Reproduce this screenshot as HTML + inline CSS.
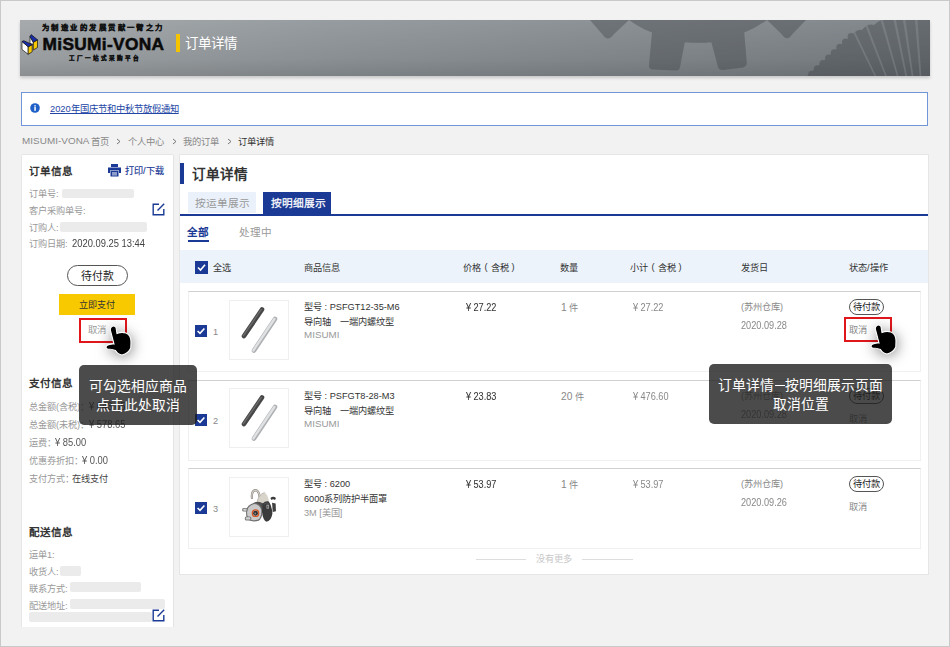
<!DOCTYPE html>
<html lang="zh-CN">
<head>
<meta charset="utf-8">
<style>
*{margin:0;padding:0;box-sizing:border-box}
html,body{width:950px;height:647px;overflow:hidden}
body{background:#f2f2f2;font-family:"Liberation Sans",sans-serif;position:relative;color:#333}
.a{position:absolute;white-space:nowrap;line-height:1}
#frame{position:absolute;left:0;top:0;width:950px;height:647px;border:1px solid #c9c9c9;pointer-events:none;z-index:50}
#banner{position:absolute;left:20px;top:20px;width:910px;height:56px;background:linear-gradient(180deg,rgba(255,255,255,.07),rgba(0,0,0,.04) 70%,rgba(0,0,0,.13)),linear-gradient(90deg,#a0a4a7 0%,#8e9498 35%,#858b8f 60%,#787e83 100%);box-shadow:0 2px 3px rgba(0,0,0,.18);overflow:hidden}
#notice{position:absolute;left:21px;top:92px;width:907px;height:34px;background:#fff;border:1px solid #7096d8}
.panel{position:absolute;background:#fff;box-shadow:0 0 0 1px #e6e6e6}
.pnb{box-shadow:-1px 0 0 #e6e6e6,1px 0 0 #e3e3e3,0 -1px 0 #e6e6e6}
.lb{color:#999;font-size:9.2px}
.dk{color:#333}
.bar{position:absolute;background:#ebebeb;border-radius:2px}
.cb{position:absolute;width:12px;height:12px;background:#1b3a95}
.cb svg{position:absolute;left:0;top:0}
.row{position:absolute;left:188px;width:733px;height:81px;border:1px solid #f0f0f0;border-top:1px solid #d0d0d0;background:#fff}
.img{position:absolute;left:229px;width:60px;height:60px;border:1px solid #efefef;background:#fff}
.pill{position:absolute;border:1px solid #555;border-radius:8px;height:16px;width:35px;font-size:9.2px;line-height:15px;text-align:center;color:#222}
.redbox{position:absolute;border:2px solid #e0161b}
.tip{position:absolute;background:rgba(30,30,30,.8);border-radius:5px;color:#fff;font-size:13.8px;line-height:19px;text-align:center}
.t9{font-size:9.2px}
.gr{color:#888}
.hand{position:absolute;width:30px;height:30px}
</style>
</head>
<body>
<div id="frame"></div>

<!-- banner -->
<div id="banner">
  <svg width="910" height="56" style="position:absolute;left:0;top:0">
    <g fill="#32353a" opacity="0.32">
      <path d="M570,0 L582.5,14.5 Q588,22.5 593.5,14.5 L609,0 Q620,8 632,12.6 L629,45 Q628.5,49.5 633,49.5 L655,50.5 Q659.5,51 660,47 L664.8,22.2 Q678,23.5 691.4,22.2 L698,47 Q699,50.5 703,50 L723,47.5 Q727,46.5 726.8,42.5 L724.2,12.6 Q736,8 747,0 L761.5,14 Q767,22.5 772.5,14 L786,0 Z"/>
      <path d="M787,56 L832,15 Q837,9 842,10 Q848,3 854,5 Q860,-1 866,0 L910,0 L910,56 Z"/>
      <circle cx="791.8" cy="54.3" r="3.6"/><circle cx="797.4" cy="48.9" r="3.6"/><circle cx="803.1" cy="43.6" r="3.6"/><circle cx="808.7" cy="38.2" r="3.6"/><circle cx="814.3" cy="32.8" r="3.6"/><circle cx="819.9" cy="27.4" r="3.6"/><circle cx="825.6" cy="22.1" r="3.6"/><circle cx="831.2" cy="16.7" r="3.6"/>
    </g>
    <clipPath id="fanclip"><path d="M787,56 L832,15 Q837,9 842,10 Q848,3 854,5 Q860,-1 866,0 L910,0 L910,56 Z"/></clipPath>
    <g fill="#b8bbbe" opacity="0.22" clip-path="url(#fanclip)">
      <polygon points="909,167 827,0 829.5,0"/>
      <polygon points="909,167 843,0 845.5,0"/>
      <polygon points="909,167 860.5,0 863,0"/>
      <polygon points="909,167 873.5,0 876,0"/>
      <polygon points="909,167 883,0 885.5,0"/>
      <polygon points="909,167 895,0 897.5,0"/>
    </g>
  </svg>
  <!-- logo -->
  <svg width="20" height="24" viewBox="0 0 20 24" style="position:absolute;left:0;top:12px">
    <g stroke="#151515" stroke-width="0.7" stroke-linejoin="round">
      <polygon points="10,4.5 13.3,10.3 13.3,12.5 10,11.5" fill="#fff"/>
      <polygon points="13.3,10.3 17.5,7.8 17.5,15.5 13.3,18" fill="#f5c800"/>
      <polygon points="10,4.5 11.2,2.6 17.5,7.8 13.3,10.3" fill="#1a2ea8"/>
      <polygon points="2,9.5 8.2,14.8 8.2,22.3 2,17.5" fill="#fff"/>
      <polygon points="8.2,14.8 12.2,12.6 12.2,19.8 8.2,22.3" fill="#f5c800"/>
      <polygon points="2,9.5 3.8,8.7 12.2,12.6 8.2,14.8" fill="#1a2ea8"/>
    </g>
  </svg>
  <div class="a" style="left:22px;top:4px;font-size:7.4px;font-weight:bold;color:#111;letter-spacing:2.45px;-webkit-text-stroke:0.2px #111">为制造业的发展贡献一臂之力</div>
  <div class="a" style="left:22.5px;top:16px;font-size:17.3px;font-weight:bold;color:#0a0a0a;letter-spacing:0.35px;-webkit-text-stroke:0.55px #0a0a0a">MiSUMi-VONA</div>
  <div class="a" style="left:48.5px;top:36px;font-size:5.6px;font-weight:bold;color:#111;letter-spacing:2.05px;-webkit-text-stroke:0.3px #111">工厂一站式采购平台</div>
  <div style="position:absolute;left:156px;top:14px;width:4px;height:18px;background:#f5c400"></div>
  <div class="a" style="left:165px;top:17px;font-size:13.5px;color:#fff">订单详情</div>
</div>

<!-- notice -->
<div id="notice">
  <svg width="10" height="10" style="position:absolute;left:8px;top:10px"><circle cx="5" cy="5" r="4.8" fill="#1f5fc8"/><rect x="4.3" y="4" width="1.5" height="3.8" fill="#fff"/><rect x="4.3" y="2.2" width="1.5" height="1.3" fill="#fff"/></svg>
  <div class="a" style="left:28px;top:12px;font-size:9.3px;color:#2346a6;text-decoration:underline">2020年国庆节和中秋节放假通知</div>
</div>

<!-- breadcrumb -->
<div class="a" style="left:22px;top:136px;font-size:9.9px;color:#888;letter-spacing:0.05px">MISUMI-VONA</div><div class="a" style="left:91px;top:138px;font-size:9.3px;color:#888">首页</div>
<svg width="5" height="7" style="position:absolute;left:116px;top:138px"><path d="M1,1 L4,3.5 L1,6" fill="none" stroke="#777" stroke-width="1"/></svg>
<div class="a" style="left:128px;top:138px;font-size:9.3px;color:#888">个人中心</div>
<svg width="5" height="7" style="position:absolute;left:171.5px;top:138px"><path d="M1,1 L4,3.5 L1,6" fill="none" stroke="#777" stroke-width="1"/></svg>
<div class="a" style="left:183px;top:138px;font-size:9.3px;color:#888">我的订单</div>
<svg width="5" height="7" style="position:absolute;left:226.5px;top:138px"><path d="M1,1 L4,3.5 L1,6" fill="none" stroke="#777" stroke-width="1"/></svg>
<div class="a" style="left:238px;top:138px;font-size:9.3px;color:#333">订单详情</div>

<!-- left panel -->
<div class="panel pnb" style="left:22px;top:155px;width:151px;height:472px"></div>
<div class="a" style="left:29px;top:166px;font-size:10.6px;font-weight:bold;color:#333">订单信息</div>
<svg width="14" height="13" viewBox="0 0 14 13" style="position:absolute;left:108px;top:164px">
  <path fill="#1b3a95" d="M3,0 H10 V3 H3 Z M0,3.5 H13 V9 H11 V6.5 H2 V9 H0 Z M2.5,7 H10.5 V12.5 H2.5 Z"/>
  <rect x="4" y="8.5" width="5" height="1" fill="#fff"/><rect x="4" y="10.5" width="5" height="0.8" fill="#fff"/>
</svg>
<div class="a" style="left:125px;top:167px;font-size:9.1px;color:#1b3a95;-webkit-text-stroke:0.15px #1b3a95">打印/下载</div>

<div class="a lb" style="left:29px;top:190px">订单号:</div>
<div class="bar" style="left:62px;top:189px;width:72px;height:9px"></div>
<div class="a lb" style="left:29px;top:207px">客户采购单号:</div>
<svg width="13" height="13" viewBox="0 0 13 13" style="position:absolute;left:152px;top:203px">
  <path fill="none" stroke="#1b3a95" stroke-width="1.4" d="M7,1.2 H1.2 V11.8 H11.8 V6"/>
  <path fill="none" stroke="#1b3a95" stroke-width="1.4" d="M5.5,7.5 L12.2,0.8"/>
</svg>
<div class="a lb" style="left:29px;top:224px">订购人:</div>
<div class="bar" style="left:60px;top:222px;width:87px;height:10px"></div>
<div class="a lb" style="left:29px;top:240px">订购日期:</div><div class="a" style="left:71.5px;top:239px;font-size:10.2px;color:#444;transform:scaleX(0.92);transform-origin:0 0">2020.09.25 13:44</div>

<div class="pill" style="left:67px;top:265px;width:61px;height:21px;border-radius:11px;font-size:10.8px;line-height:21px;border-color:#555">待付款</div>
<div style="position:absolute;left:59px;top:294px;width:76px;height:21px;background:#f9c900"></div>
<div class="a" style="left:79px;top:301px;font-size:9.1px;color:#333">立即支付</div>
<div class="redbox" style="left:79px;top:318px;width:48px;height:25px"></div>
<div class="a" style="left:88px;top:325px;font-size:9.4px;color:#999">取消</div>

<div class="a" style="left:29px;top:378px;font-size:10.6px;font-weight:bold;color:#333">支付信息</div>
<div class="a lb" style="left:29px;top:403px">总金额(含税)：</div><div class="a" style="left:89px;top:402px;font-size:10.4px;color:#555;transform:scaleX(0.9);transform-origin:0 0">¥ 643.65</div>
<div class="a lb" style="left:29px;top:421px">总金额(未税)：</div><div class="a" style="left:89px;top:420px;font-size:10.4px;color:#555;transform:scaleX(0.9);transform-origin:0 0">¥ 578.65</div>
<div class="a lb" style="left:29px;top:439px">运费：</div><div class="a" style="left:55px;top:438px;font-size:10.4px;color:#555;transform:scaleX(0.9);transform-origin:0 0">¥ 85.00</div>
<div class="a lb" style="left:29px;top:457px">优惠券折扣：</div><div class="a" style="left:82px;top:456px;font-size:10.4px;color:#555;transform:scaleX(0.9);transform-origin:0 0">¥ 0.00</div>
<div class="a lb" style="left:29px;top:475px">支付方式：</div><div class="a" style="left:71.5px;top:475px;font-size:9.2px;color:#444">在线支付</div>

<div class="a" style="left:29px;top:527px;font-size:10.6px;font-weight:bold;color:#333">配送信息</div>
<div class="a lb" style="left:29px;top:551px">运单1:</div>
<div class="a lb" style="left:29px;top:568px">收货人:</div>
<div class="bar" style="left:60px;top:566px;width:21px;height:10px"></div>
<div class="a lb" style="left:29px;top:585px">联系方式:</div>
<div class="bar" style="left:70px;top:582px;width:71px;height:10px"></div>
<div class="a lb" style="left:29px;top:602px">配送地址:</div>
<div class="bar" style="left:70px;top:599px;width:95px;height:10px"></div>
<div class="bar" style="left:29px;top:612px;width:123px;height:10px"></div>
<svg width="13" height="13" viewBox="0 0 13 13" style="position:absolute;left:152px;top:609px">
  <path fill="none" stroke="#1b3a95" stroke-width="1.4" d="M7,1.2 H1.2 V11.8 H11.8 V6"/>
  <path fill="none" stroke="#1b3a95" stroke-width="1.4" d="M5.5,7.5 L12.2,0.8"/>
</svg>

<!-- right panel -->
<div class="panel" style="left:180px;top:155px;width:748px;height:419px"></div>
<div style="position:absolute;left:180px;top:163px;width:4px;height:21px;background:#1b3a95"></div>
<div class="a" style="left:192px;top:168px;font-size:13.6px;font-weight:bold;color:#333">订单详情</div>
<div style="position:absolute;left:188px;top:192px;width:68px;height:21px;background:#eaf1fb"></div>
<div class="a" style="left:195px;top:198px;font-size:10.7px;color:#999">按运单展示</div>
<div style="position:absolute;left:263px;top:192px;width:68px;height:23px;background:#1b3a95"></div>
<div class="a" style="left:271px;top:198px;font-size:10.7px;color:#fff;-webkit-text-stroke:0.25px #fff">按明细展示</div>
<div style="position:absolute;left:180px;top:214px;width:748px;height:2px;background:#1b3a95"></div>
<div class="a" style="left:187px;top:227px;font-size:10.6px;font-weight:bold;color:#1b3a95">全部</div>
<div style="position:absolute;left:188px;top:240px;width:21px;height:2px;background:#1b3a95"></div>
<div class="a" style="left:239px;top:227px;font-size:10.6px;color:#999">处理中</div>

<!-- table header -->
<div style="position:absolute;left:180px;top:250px;width:748px;height:33px;background:#edf3fb"></div>
<div class="cb" style="left:195px;top:261px;width:13px;height:13px"><svg width="13" height="13"><path d="M3,6.5 L5.5,9 L10,3.8" fill="none" stroke="#fff" stroke-width="1.6"/></svg></div>
<div class="a t9" style="left:213px;top:264px;color:#333">全选</div>
<div class="a t9" style="left:304px;top:264px;color:#333">商品信息</div>
<div class="a t9" style="left:463px;top:264px;color:#333">价格</div><div class="a t9" style="left:484.5px;top:263px;color:#333">(</div><div class="a t9" style="left:490.5px;top:264px;color:#333">含税</div><div class="a t9" style="left:511.5px;top:263px;color:#333">)</div>
<div class="a t9" style="left:560px;top:264px;color:#333">数量</div>
<div class="a t9" style="left:630px;top:264px;color:#333">小计</div><div class="a t9" style="left:651.5px;top:263px;color:#333">(</div><div class="a t9" style="left:657.5px;top:264px;color:#333">含税</div><div class="a t9" style="left:678.5px;top:263px;color:#333">)</div>
<div class="a t9" style="left:741px;top:264px;color:#333">发货日</div>
<div class="a t9" style="left:849px;top:264px;color:#333">状态/操作</div>

<!-- row 1 -->
<div class="row" style="top:291px"></div>
<div class="cb" style="left:195px;top:325px"><svg width="12" height="12"><path d="M2.6,6 L5,8.4 L9.4,3.5" fill="none" stroke="#fff" stroke-width="1.6"/></svg></div>
<div class="a t9 gr" style="left:213px;top:328px">1</div>
<div class="img" style="top:300px">
  <svg width="58" height="58" style="position:absolute;left:0;top:0">
    <line x1="32" y1="8.5" x2="14" y2="35" stroke="#474747" stroke-width="4.6" stroke-linecap="round"/>
    <line x1="31.2" y1="8.6" x2="13.4" y2="34.6" stroke="#6a6a6a" stroke-width="1.4" stroke-linecap="round"/>
    <line x1="45" y1="18" x2="24" y2="49.5" stroke="#aeb1b4" stroke-width="4.6" stroke-linecap="round"/>
    <line x1="44.4" y1="18" x2="23.4" y2="49.4" stroke="#dfe1e3" stroke-width="2.4" stroke-linecap="round"/>
  </svg>
</div>
<div class="a t9" style="left:304px;top:303px;color:#333">型号 : PSFGT12-35-M6</div>
<div class="a t9" style="left:304px;top:318px;color:#333">导向轴　一端内螺纹型</div>
<div class="a" style="left:304px;top:330px;color:#999;font-size:9.8px">MISUMI</div>
<div class="a" style="left:466px;top:303px;color:#333;font-size:10.2px;-webkit-text-stroke:0.05px #333;transform:scaleX(0.9);transform-origin:0 0">¥<span style="margin-left:2.6px">27.22</span></div>
<div class="a t9" style="left:561px;top:303px;color:#888"><span style="font-size:10.2px">1</span> 件</div>
<div class="a" style="left:633px;top:303px;color:#888;font-size:10.2px;transform:scaleX(0.9);transform-origin:0 0">¥<span style="margin-left:2.6px">27.22</span></div>
<div class="a t9" style="left:741px;top:303px;color:#888">(苏州仓库)</div>
<div class="a" style="left:741px;top:321px;color:#888;font-size:10.2px;transform:scaleX(0.9);transform-origin:0 0">2020.09.28</div>
<div class="pill" style="left:849px;top:299px">待付款</div>
<div class="a t9" style="left:849px;top:326px;color:#888">取消</div>
<div class="redbox" style="left:844px;top:317px;width:48px;height:25px"></div>

<!-- row 2 -->
<div class="row" style="top:380px"></div>
<div class="cb" style="left:195px;top:414px"><svg width="12" height="12"><path d="M2.6,6 L5,8.4 L9.4,3.5" fill="none" stroke="#fff" stroke-width="1.6"/></svg></div>
<div class="a t9 gr" style="left:213px;top:417px">2</div>
<div class="img" style="top:388px">
  <svg width="58" height="58" style="position:absolute;left:0;top:0">
    <line x1="32" y1="8.5" x2="14" y2="35" stroke="#474747" stroke-width="4.6" stroke-linecap="round"/>
    <line x1="31.2" y1="8.6" x2="13.4" y2="34.6" stroke="#6a6a6a" stroke-width="1.4" stroke-linecap="round"/>
    <line x1="45" y1="18" x2="24" y2="49.5" stroke="#aeb1b4" stroke-width="4.6" stroke-linecap="round"/>
    <line x1="44.4" y1="18" x2="23.4" y2="49.4" stroke="#dfe1e3" stroke-width="2.4" stroke-linecap="round"/>
  </svg>
</div>
<div class="a t9" style="left:304px;top:392px;color:#333">型号 : PSFGT8-28-M3</div>
<div class="a t9" style="left:304px;top:407px;color:#333">导向轴　一端内螺纹型</div>
<div class="a" style="left:304px;top:419px;color:#999;font-size:9.8px">MISUMI</div>
<div class="a" style="left:466px;top:392px;color:#333;font-size:10.2px;-webkit-text-stroke:0.05px #333;transform:scaleX(0.9);transform-origin:0 0">¥<span style="margin-left:2.6px">23.83</span></div>
<div class="a t9" style="left:561px;top:392px;color:#888"><span style="font-size:10.2px">20</span> 件</div>
<div class="a" style="left:633px;top:392px;color:#888;font-size:10.2px;transform:scaleX(0.9);transform-origin:0 0">¥<span style="margin-left:2.6px">476.60</span></div>
<div class="a t9" style="left:741px;top:392px;color:#888">(苏州仓库)</div>
<div class="a" style="left:741px;top:410px;color:#888;font-size:10.2px;transform:scaleX(0.9);transform-origin:0 0">2020.09.28</div>
<div class="pill" style="left:849px;top:388px">待付款</div>
<div class="a t9" style="left:849px;top:415px;color:#888">取消</div>

<!-- row 3 -->
<div class="row" style="top:468px"></div>
<div class="cb" style="left:195px;top:502px"><svg width="12" height="12"><path d="M2.6,6 L5,8.4 L9.4,3.5" fill="none" stroke="#fff" stroke-width="1.6"/></svg></div>
<div class="a t9 gr" style="left:213px;top:505px">3</div>
<div class="img" style="top:477px">
  <svg width="58" height="58" viewBox="-123.3 -92.5 893.8 893.8" style="position:absolute;left:0;top:0">
    <path d="M215,215 Q205,110 265,95 Q320,95 335,200" fill="none" stroke="#7d7a74" stroke-width="34" stroke-linecap="round"/>
    <path d="M215,215 Q205,110 265,95 Q320,95 335,200" fill="none" stroke="#cfcbc2" stroke-width="20" stroke-linecap="round"/>
    <path d="M295,270 Q320,160 410,130 Q465,170 475,270 L400,310 L300,310 Z" fill="#d8d4ca"/>
    <path d="M295,270 Q320,160 410,130" fill="none" stroke="#a8a399" stroke-width="10"/>
    <path d="M500,215 Q540,180 585,215 L570,245 Q540,225 515,245 Z" fill="#3a3a3a"/>
    <path d="M525,290 L580,300 L585,420 L535,430 Z" fill="#3f3f3f"/>
    <path d="M230,300 Q300,250 390,300 L395,430 L260,420 Z" fill="#505050"/>
    <path d="M125,440 Q120,330 250,290 Q350,300 375,400 Q385,520 320,565 Q230,590 170,560 Q120,520 125,440 Z" fill="#6e6e6e"/>
    <path d="M140,440 Q140,345 250,310 Q340,320 358,405 Q365,510 312,548 Q232,570 182,545 Q140,510 140,440 Z" fill="#cacaca"/>
    <circle cx="270" cy="450" r="62" fill="#e2e2e2"/>
    <circle cx="270" cy="450" r="50" fill="none" stroke="#cf5420" stroke-width="20"/>
    <circle cx="270" cy="450" r="38" fill="#2e2e2e"/>
    <circle cx="265" cy="455" r="14" fill="#8a8a8a"/>
    <path d="M380,300 Q425,255 475,270 Q520,330 530,450 Q520,560 440,580 Q385,560 370,430 Z" fill="#3b3b3b"/>
    <path d="M400,310 Q440,280 470,300" fill="none" stroke="#666" stroke-width="10"/>
    <rect x="440" y="320" width="38" height="58" fill="#bdbdbd"/>
    <rect x="448" y="330" width="22" height="38" fill="#5a5a5a"/>
    <rect x="65" y="370" width="80" height="55" rx="22" fill="#777"/>
    <rect x="80" y="382" width="52" height="30" rx="12" fill="#d5d5d5"/>
    <rect x="105" y="500" width="100" height="62" rx="24" fill="#777"/>
    <rect x="120" y="512" width="70" height="36" rx="14" fill="#d2d2d2"/>
  </svg>
</div>
<div class="a t9" style="left:304px;top:480px;color:#333">型号 : 6200</div>
<div class="a t9" style="left:304px;top:495px;color:#333">6000系列防护半面罩</div>
<div class="a t9" style="left:304px;top:509px;color:#999">3M [美国]</div>
<div class="a" style="left:466px;top:480px;color:#333;font-size:10.2px;-webkit-text-stroke:0.05px #333;transform:scaleX(0.9);transform-origin:0 0">¥<span style="margin-left:2.6px">53.97</span></div>
<div class="a t9" style="left:561px;top:480px;color:#888"><span style="font-size:10.2px">1</span> 件</div>
<div class="a" style="left:633px;top:480px;color:#888;font-size:10.2px;transform:scaleX(0.9);transform-origin:0 0">¥<span style="margin-left:2.6px">53.97</span></div>
<div class="a t9" style="left:741px;top:480px;color:#888">(苏州仓库)</div>
<div class="a" style="left:741px;top:498px;color:#888;font-size:10.2px;transform:scaleX(0.9);transform-origin:0 0">2020.09.26</div>
<div class="pill" style="left:849px;top:476px">待付款</div>
<div class="a t9" style="left:849px;top:503px;color:#888">取消</div>

<!-- no more -->
<div style="position:absolute;left:476px;top:559px;width:50px;height:1px;background:#ddd"></div>
<div class="a t9" style="left:536px;top:555px;color:#c8c8c8">没有更多</div>
<div style="position:absolute;left:582px;top:559px;width:51px;height:1px;background:#ddd"></div>

<!-- tooltips -->
<div class="tip" style="left:79px;top:365px;width:118px;height:60px;padding-top:11.5px">可勾选相应商品<br>点击此处取消</div>
<div class="tip" style="left:709px;top:364px;width:183px;height:60px;padding-top:12px">订单详情<span style="display:inline-block;width:9.5px;height:1.4px;background:#fff;vertical-align:middle;margin:0 0.5px 0 1px;position:relative;top:-1px"></span>按明细展示页面<br>取消位置</div>

<!-- hands -->
<svg width="0" height="0" style="position:absolute"><defs><filter id="sh" x="-150%" y="-150%" width="400%" height="400%"><feGaussianBlur stdDeviation="7"/></filter></defs></svg>
<svg width="90" height="90" style="position:absolute;left:70px;top:288px">
  <g transform="translate(30,30)">
  <path d="M11,9.5 Q13.5,6.5 16,9.5 L17,15.5 Q21.5,13.5 26,15 Q31,17 31,24 L30.8,30 Q28.5,35.5 22,37 Q18,36.5 15.5,32.5 Q12,31 7.5,31 Q5,30 6.8,27.5 Q10,25.5 14,26 L10.3,12 Q10.2,10.5 11,9.5 Z" fill="rgba(0,0,0,.5)" filter="url(#sh)" transform="translate(1,2)"/>
  <path d="M11,9.5 Q13.5,6.5 16,9.5 L17,15.5 Q21.5,13.5 26,15 Q31,17 31,24 L30.8,30 Q28.5,35.5 22,37 Q18,36.5 15.5,32.5 Q12,31 7.5,31 Q5,30 6.8,27.5 Q10,25.5 14,26 L10.3,12 Q10.2,10.5 11,9.5 Z" fill="#000" stroke="#fff" stroke-width="1.1"/>
  </g>
</svg>
<svg width="90" height="90" style="position:absolute;left:835px;top:287px">
  <g transform="translate(30,30)">
  <path d="M11,9.5 Q13.5,6.5 16,9.5 L17,15.5 Q21.5,13.5 26,15 Q31,17 31,24 L30.8,30 Q28.5,35.5 22,37 Q18,36.5 15.5,32.5 Q12,31 7.5,31 Q5,30 6.8,27.5 Q10,25.5 14,26 L10.3,12 Q10.2,10.5 11,9.5 Z" fill="rgba(0,0,0,.5)" filter="url(#sh)" transform="translate(1,2)"/>
  <path d="M11,9.5 Q13.5,6.5 16,9.5 L17,15.5 Q21.5,13.5 26,15 Q31,17 31,24 L30.8,30 Q28.5,35.5 22,37 Q18,36.5 15.5,32.5 Q12,31 7.5,31 Q5,30 6.8,27.5 Q10,25.5 14,26 L10.3,12 Q10.2,10.5 11,9.5 Z" fill="#000" stroke="#fff" stroke-width="1.1"/>
  </g>
</svg>

</body>
</html>
